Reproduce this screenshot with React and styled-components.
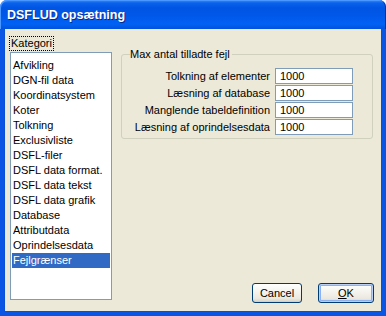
import React from "react";
import styled, { createGlobalStyle } from "styled-components";

const GlobalStyle = createGlobalStyle`
  html, body { margin: 0; padding: 0; background: #ffffff; }
  * { box-sizing: border-box; }
`;

const Window = styled.div`
  width: 386px;
  height: 316px;
  display: flex;
  flex-direction: column;
  font-family: "Liberation Sans", Arial, sans-serif;
  font-size: 11px;
  color: #000;
`;

const TitleBar = styled.div`
  height: 29px;
  flex: none;
  display: flex;
  align-items: center;
  padding: 1px 0 0 7px;
  border-radius: 7px 7px 0 0;
  background: linear-gradient(
    to bottom,
    #3c8cf7 0px,
    #0a62ec 3px,
    #0054e3 8px,
    #0058ea 16px,
    #0062f5 24px,
    #0052dc 29px
  );
  box-shadow: inset 1px 1px 0 #4a98ff, inset -1px 0 0 #0033b8;
`;

const Title = styled.span`
  font-family: "Liberation Sans", Arial, sans-serif;
  font-weight: bold;
  font-size: 12.5px;
  color: #ffffff;
  text-shadow: 1px 1px 0 #0a2a8a;
  letter-spacing: 0;
`;

const Frame = styled.div`
  flex: 1;
  display: flex;
  background: #ece9d8;
  border: 4px solid #0a55e4;
  border-top: 0;
  box-shadow: inset 1px 0 0 #0a4fd8, inset -1px 0 0 #0a4fd8, inset 0 -1px 0 #0a4fd8;
  padding-top: 7px;
  position: relative;
`;

const LeftColumn = styled.div`
  width: 102px;
  margin-left: 6px;
  padding-bottom: 12px;
  display: flex;
  flex-direction: column;
`;

const CategoryLabel = styled.div`
  align-self: flex-start;
  margin-left: -1px;
  padding: 0 1px;
  line-height: 13px;
  border: 1px dotted #000;
  margin-bottom: 1px;
`;

const ListBox = styled.ul`
  flex: 1;
  margin: 0;
  padding: 5px 1px 0 1px;
  list-style: none;
  background: #ffffff;
  border: 1px solid #7f9db9;
`;

const ListItem = styled.li`
  height: 15px;
  line-height: 15px;
  padding-left: 1px;
  background: ${(p) => (p.$selected ? "#316ac5" : "transparent")};
  color: ${(p) => (p.$selected ? "#ffffff" : "#000000")};
  white-space: nowrap;
`;

const RightColumn = styled.div`
  flex: 1;
  margin-left: 9px;
  margin-right: 8px;
  padding-bottom: 9px;
  display: flex;
  flex-direction: column;
`;

const GroupBox = styled.fieldset`
  margin: 12px 1px 0 0;
  padding: 7px 19px 3px 8px;
  border: 1px solid #d0d0bf;
  border-radius: 3px;
  min-inline-size: 0;
`;

const Legend = styled.legend`
  padding: 0 2px 0 0;
  line-height: 13px;
  color: #000;
`;

const FieldGrid = styled.div`
  display: grid;
  grid-template-columns: 1fr 78px;
  column-gap: 5px;
  row-gap: 1px;
`;

const FieldLabel = styled.span`
  text-align: right;
  line-height: 16px;
  white-space: nowrap;
`;

const TextBox = styled.input`
  height: 16px;
  width: 78px;
  margin: 0;
  padding: 0 4px;
  border: 1px solid #7f9db9;
  background: #fff;
  font-family: "Liberation Sans", Arial, sans-serif;
  font-size: 11px;
  color: #000;
  outline: none;
`;

const ButtonRow = styled.div`
  margin-top: auto;
  display: flex;
  justify-content: flex-end;
  gap: 16px;
`;

const Button = styled.button`
  width: ${(p) => p.$w}px;
  height: 20px;
  margin: 0;
  padding: 0;
  font-family: "Liberation Sans", Arial, sans-serif;
  font-size: 11px;
  color: #000;
  border: 1px solid #003c74;
  border-radius: 3px;
  background: linear-gradient(to bottom, #ffffff 0%, #f5f4ef 40%, #ebe8df 80%, #d8d2c4 100%);
  box-shadow: ${(p) =>
    p.$default
      ? "inset 0 0 0 1px #b8d0f8, inset 0 0 0 2px #8cb0f0"
      : "inset 0 -1px 0 #d6d0c5"};
`;

const Mnemonic = styled.span`
  text-decoration: underline;
`;

const categories = [
  "Afvikling",
  "DGN-fil data",
  "Koordinatsystem",
  "Koter",
  "Tolkning",
  "Exclusivliste",
  "DSFL-filer",
  "DSFL data format.",
  "DSFL data tekst",
  "DSFL data grafik",
  "Database",
  "Attributdata",
  "Oprindelsesdata",
  "Fejlgrænser",
];

const fields = [
  "Tolkning af elementer",
  "Læsning af database",
  "Manglende tabeldefinition",
  "Læsning af oprindelsesdata",
];

export default function App() {
  return (
    <>
      <GlobalStyle />
      <Window>
        <TitleBar>
          <Title>DSFLUD opsætning</Title>
        </TitleBar>
        <Frame>
          <LeftColumn>
            <CategoryLabel>Kategori</CategoryLabel>
            <ListBox>
              {categories.map((c) => (
                <ListItem key={c} $selected={c === "Fejlgrænser"}>
                  {c}
                </ListItem>
              ))}
            </ListBox>
          </LeftColumn>
          <RightColumn>
            <GroupBox>
              <Legend>Max antal tilladte fejl</Legend>
              <FieldGrid>
                {fields.map((f) => (
                  <React.Fragment key={f}>
                    <FieldLabel>{f}</FieldLabel>
                    <TextBox readOnly value="1000" />
                  </React.Fragment>
                ))}
              </FieldGrid>
            </GroupBox>
            <ButtonRow>
              <Button $w={50}>Cancel</Button>
              <Button $w={56} $default>
                <Mnemonic>O</Mnemonic>K
              </Button>
            </ButtonRow>
          </RightColumn>
        </Frame>
      </Window>
    </>
  );
}
